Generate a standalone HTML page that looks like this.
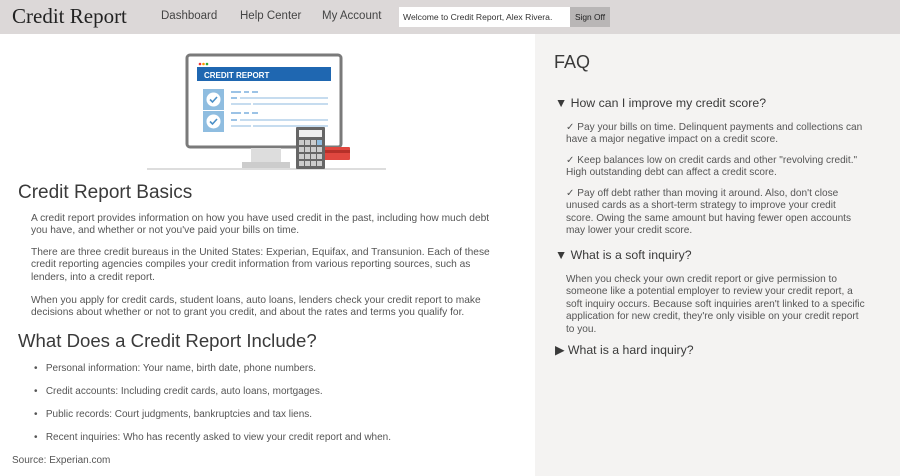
<!DOCTYPE html>
<html><head><meta charset="utf-8"><style>
*{margin:0;padding:0;box-sizing:border-box}
body{width:900px;height:476px;overflow:hidden;background:#fff;font-family:"Liberation Sans",sans-serif;color:#444;position:relative}
.a{position:absolute;white-space:nowrap}
.hdr{position:absolute;left:0;top:0;width:900px;height:34px;background:#dcd8d8}
.side{position:absolute;left:535px;top:34px;width:365px;height:442px;background:#f4f3f2}
.p{font-size:10.2px;line-height:12.3px;color:#555}
.b{font-size:10px;line-height:12px;color:#555}
.f{font-size:10.1px;line-height:12.4px;color:#555}
.h{color:#3a3a3a}
</style></head><body>
<div class="hdr"></div>
<div class="side"></div>
<div class="a" style="left:12px;top:4px;font-family:'Liberation Serif',serif;font-size:21px;color:#222">Credit Report</div>
<div class="a" style="left:161px;top:10px;font-size:11.5px;color:#444">Dashboard</div>
<div class="a" style="left:240px;top:10px;font-size:11.5px;color:#444">Help Center</div>
<div class="a" style="left:322px;top:10px;font-size:11.5px;color:#444">My Account</div>
<div class="a" style="left:399px;top:7px;width:171px;height:20px;background:#fff;font-size:8.6px;line-height:20px;padding-left:4px;color:#333">Welcome to Credit Report, Alex Rivera.</div>
<div class="a" style="left:570px;top:7px;width:40px;height:20px;background:#b9b6b6;font-size:8.4px;line-height:20px;text-align:center;color:#222">Sign Off</div>

<svg class="a" style="left:140px;top:40px" width="260" height="135" viewBox="0 0 260 135">
<rect x="47" y="15" width="154" height="92" rx="3" fill="#fff" stroke="#7a7a7a" stroke-width="3"/>
<circle cx="60" cy="24" r="1.3" fill="#e33"/><circle cx="63.5" cy="24" r="1.3" fill="#f90"/><circle cx="67" cy="24" r="1.3" fill="#3a3"/>
<rect x="57" y="27" width="134" height="14" fill="#1f67b1"/>
<text x="64" y="38" font-family="Liberation Sans" font-weight="bold" font-size="8" fill="#fff">CREDIT REPORT</text>
<rect x="63" y="49" width="21" height="21" fill="#8fbde0"/><circle cx="73.5" cy="59.5" r="7" fill="#fff"/><path d="M70 59.5l2.5 2.5 4.5-5" stroke="#4a8fc7" stroke-width="1.6" fill="none"/>
<rect x="63" y="71" width="21" height="21" fill="#8fbde0"/><circle cx="73.5" cy="81.5" r="7" fill="#fff"/><path d="M70 81.5l2.5 2.5 4.5-5" stroke="#4a8fc7" stroke-width="1.6" fill="none"/>
<g fill="#9cc3e6"><rect x="91" y="51" width="10" height="2"/><rect x="104" y="51" width="5" height="2"/><rect x="112" y="51" width="6" height="2"/>
<rect x="91" y="57" width="6" height="2"/><rect x="100" y="57" width="88" height="2" fill="#c6dcef"/><rect x="91" y="63" width="20" height="2" fill="#c6dcef"/><rect x="113" y="63" width="75" height="2" fill="#c6dcef"/>
<rect x="91" y="72" width="10" height="2"/><rect x="104" y="72" width="5" height="2"/><rect x="112" y="72" width="6" height="2"/>
<rect x="91" y="79" width="6" height="2"/><rect x="100" y="79" width="88" height="2" fill="#c6dcef"/><rect x="91" y="85" width="20" height="2" fill="#c6dcef"/><rect x="113" y="85" width="75" height="2" fill="#c6dcef"/></g>
<rect x="111" y="108" width="30" height="14" fill="#ddd"/><rect x="102" y="122" width="48" height="6" fill="#ccc"/>
<rect x="7" y="128" width="239" height="2" fill="#ddd"/>
<rect x="182" y="107" width="28" height="13" rx="1" fill="#e0473f"/><rect x="182" y="110" width="28" height="3" fill="#b63029"/>
<rect x="156" y="87" width="29" height="42" rx="1" fill="#666"/><rect x="159" y="90" width="23" height="7" fill="#eee"/>
<g fill="#ccc"><rect x="159" y="100" width="5" height="5"/><rect x="165" y="100" width="5" height="5"/><rect x="171" y="100" width="5" height="5"/><rect x="177" y="100" width="5" height="5" fill="#8fbde0"/>
<rect x="159" y="107" width="5" height="5"/><rect x="165" y="107" width="5" height="5"/><rect x="171" y="107" width="5" height="5"/><rect x="177" y="107" width="5" height="5"/>
<rect x="159" y="114" width="5" height="5"/><rect x="165" y="114" width="5" height="5"/><rect x="171" y="114" width="5" height="5"/><rect x="177" y="114" width="5" height="5"/>
<rect x="159" y="121" width="5" height="5"/><rect x="165" y="121" width="5" height="5"/><rect x="171" y="121" width="5" height="5"/><rect x="177" y="121" width="5" height="5"/></g>
</svg>

<div class="a h" style="left:18px;top:182px;font-size:19px">Credit Report Basics</div>
<div class="a p" style="left:31px;top:213px">A credit report provides information on how you have used credit in the past, including how much debt<br>you have, and whether or not you've paid your bills on time.</div>
<div class="a p" style="left:31px;top:247px">There are three credit bureaus in the United States: Experian, Equifax, and Transunion. Each of these<br>credit reporting agencies compiles your credit information from various reporting sources, such as<br>lenders, into a credit report.</div>
<div class="a p" style="left:31px;top:295px">When you apply for credit cards, student loans, auto loans, lenders check your credit report to make<br>decisions about whether or not to grant you credit, and about the rates and terms you qualify for.</div>
<div class="a h" style="left:18px;top:330px;font-size:18.6px">What Does a Credit Report Include?</div>
<div class="a b" style="left:34px;top:363px">•&nbsp;&nbsp;&nbsp;Personal information: Your name, birth date, phone numbers.</div>
<div class="a b" style="left:34px;top:386px">•&nbsp;&nbsp;&nbsp;Credit accounts: Including credit cards, auto loans, mortgages.</div>
<div class="a b" style="left:34px;top:409px">•&nbsp;&nbsp;&nbsp;Public records: Court judgments, bankruptcies and tax liens.</div>
<div class="a b" style="left:34px;top:432px">•&nbsp;&nbsp;&nbsp;Recent inquiries: Who has recently asked to view your credit report and when.</div>
<div class="a b" style="left:12px;top:455px">Source: Experian.com</div>

<div class="a h" style="left:554px;top:52px;font-size:18px">FAQ</div>
<div class="a h" style="left:555px;top:96px;font-size:12.3px">▼&nbsp;How can I improve my credit score?</div>
<div class="a f" style="left:566px;top:122px">✓ Pay your bills on time. Delinquent payments and collections can<br>have a major negative impact on a credit score.</div>
<div class="a f" style="left:566px;top:155px">✓ Keep balances low on credit cards and other "revolving credit."<br>High outstanding debt can affect a credit score.</div>
<div class="a f" style="left:566px;top:188px">✓ Pay off debt rather than moving it around. Also, don't close<br>unused cards as a short-term strategy to improve your credit<br>score. Owing the same amount but having fewer open accounts<br>may lower your credit score.</div>
<div class="a h" style="left:555px;top:248px;font-size:12.3px">▼&nbsp;What is a soft inquiry?</div>
<div class="a f" style="left:566px;top:274px">When you check your own credit report or give permission to<br>someone like a potential employer to review your credit report, a<br>soft inquiry occurs. Because soft inquiries aren't linked to a specific<br>application for new credit, they're only visible on your credit report<br>to you.</div>
<div class="a h" style="left:555px;top:343px;font-size:12.3px">▶&nbsp;What is a hard inquiry?</div>
</body></html>
